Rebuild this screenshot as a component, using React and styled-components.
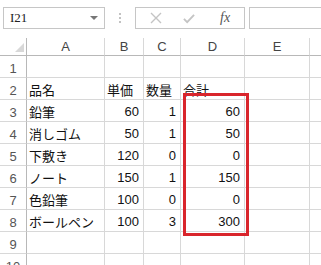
import React from 'react';
import styled, { createGlobalStyle } from 'styled-components';

const GlobalStyle = createGlobalStyle`
  html, body {
    margin: 0;
    padding: 0;
    background: #ffffff;
  }
  body {
    font-family: "Liberation Sans", "Noto Sans CJK JP", sans-serif;
    overflow: hidden;
  }
`;

const columns = [
  { key: 'A', width: 78 },
  { key: 'B', width: 39 },
  { key: 'C', width: 37 },
  { key: 'D', width: 64 },
  { key: 'E', width: 65 },
  { key: 'F', width: 40 },
];

const rows = [
  ['', '', '', '', ''],
  ['品名', '単価', '数量', '合計', ''],
  ['鉛筆', 60, 1, 60, ''],
  ['消しゴム', 50, 1, 50, ''],
  ['下敷き', 120, 0, 0, ''],
  ['ノート', 150, 1, 150, ''],
  ['色鉛筆', 100, 0, 0, ''],
  ['ボールペン', 100, 3, 300, ''],
  ['', '', '', '', ''],
  ['', '', '', '', ''],
];

const gridTemplate = `27px ${columns.map((c) => `${c.width}px`).join(' ')}`;

export default function App() {
  return (
    <>
      <GlobalStyle />
      <Sheet>
        <FormulaBar>
          <NameBox>
            <span>I21</span>
            <Caret />
          </NameBox>
          <Grip>
            <i />
            <i />
            <i />
          </Grip>
          <ButtonBox>
            <IconButton>
              <svg width="12" height="12" viewBox="0 0 12 12">
                <path d="M1 1 L11 11 M11 1 L1 11" stroke="#c4c4c4" strokeWidth="1.4" fill="none" />
              </svg>
            </IconButton>
            <IconButton>
              <svg width="13" height="11" viewBox="0 0 13 11">
                <path d="M1 6 L4.5 9.5 L12 1.5" stroke="#c4c4c4" strokeWidth="2" fill="none" />
              </svg>
            </IconButton>
            <Fx>fx</Fx>
          </ButtonBox>
          <FormulaInput />
        </FormulaBar>

        <GridWrap>
          <Grid>
            <Corner>
              <svg width="9" height="9" viewBox="0 0 9 9">
                <path d="M9 0 L9 9 L0 9 Z" fill="#d8d8d8" />
              </svg>
            </Corner>
            {columns.map((c) => (
              <ColHead key={c.key} $last={c.key === 'F'}>
                {c.key === 'F' ? '' : c.key}
              </ColHead>
            ))}
            {rows.map((r, i) => (
              <React.Fragment key={i}>
                <RowHead>{i + 1}</RowHead>
                {r.map((v, j) => (
                  <Cell key={j} $num={typeof v === 'number'}>
                    {v}
                  </Cell>
                ))}
                <Cell />
              </React.Fragment>
            ))}
          </Grid>
          <Highlight />
        </GridWrap>
      </Sheet>
    </>
  );
}

const Sheet = styled.div`
  width: 321px;
  height: 265px;
  overflow: hidden;
  background: #ffffff;
`;

const FormulaBar = styled.div`
  display: flex;
  align-items: center;
  height: 22px;
  padding: 7px 0 0 3px;
`;

const NameBox = styled.div`
  box-sizing: border-box;
  width: 102px;
  height: 22px;
  border: 1px solid #c6c6c6;
  display: flex;
  align-items: center;
  justify-content: space-between;
  padding: 0 5px 0 6px;
  font-family: "Liberation Serif", serif;
  font-size: 13px;
  color: #222;
`;

const Caret = styled.span`
  width: 0;
  height: 0;
  border-left: 4px solid transparent;
  border-right: 4px solid transparent;
  border-top: 4px solid #777;
  margin-right: 1px;
`;

const Grip = styled.div`
  width: 30px;
  display: flex;
  flex-direction: column;
  align-items: center;
  gap: 2px;

  i {
    display: block;
    width: 2px;
    height: 2px;
    background: #c2c2c2;
  }
`;

const ButtonBox = styled.div`
  box-sizing: border-box;
  width: 110px;
  height: 22px;
  border: 1px solid #c6c6c6;
  display: flex;
  align-items: center;
  padding-left: 14px;
  gap: 21px;
`;

const IconButton = styled.span`
  display: flex;
  align-items: center;
  width: 12px;
`;

const Fx = styled.span`
  font-family: "Liberation Serif", serif;
  font-style: italic;
  font-size: 14px;
  color: #555;
  margin-left: 4px;
`;

const FormulaInput = styled.div`
  box-sizing: border-box;
  flex: 1;
  height: 22px;
  margin-left: 4px;
  border: 1px solid #c6c6c6;
  border-right: none;
`;

const GridWrap = styled.div`
  position: relative;
  margin-top: 9px;
`;

const Grid = styled.div`
  display: grid;
  grid-template-columns: ${gridTemplate};
  grid-template-rows: 18px repeat(${rows.length}, 22px);
`;

const Corner = styled.div`
  box-sizing: border-box;
  border-right: 1px solid #b8b8b8;
  border-bottom: 1px solid #b8b8b8;
  display: flex;
  align-items: flex-end;
  justify-content: flex-end;
  padding: 0 2px 3px 0;
`;

const ColHead = styled.div`
  box-sizing: border-box;
  border-bottom: 1px solid #b8b8b8;
  border-right: ${({ $last }) => ($last ? 'none' : '1px solid #d8d8d8')};
  display: flex;
  align-items: flex-end;
  justify-content: center;
  padding-bottom: 1px;
  font-size: 13px;
  color: #444;
  line-height: 14px;
`;

const RowHead = styled.div`
  box-sizing: border-box;
  border-right: 1px solid #b8b8b8;
  border-bottom: 1px solid #d8d8d8;
  display: flex;
  align-items: flex-end;
  justify-content: center;
  padding-bottom: 1px;
  font-size: 13px;
  color: #555;
  line-height: 14px;
`;

const Cell = styled.div`
  box-sizing: border-box;
  border-right: 1px solid #d8d8d8;
  border-bottom: 1px solid #d8d8d8;
  display: flex;
  align-items: center;
  justify-content: ${({ $num }) => ($num ? 'flex-end' : 'flex-start')};
  padding: 1px 4px 0 2px;
  font-size: 13px;
  color: #111;
  white-space: nowrap;
  overflow: visible;
`;

const Highlight = styled.div`
  position: absolute;
  left: 183px;
  top: 55px;
  width: 66px;
  height: 143px;
  box-sizing: border-box;
  border: 3px solid #d9252c;
  pointer-events: none;
`;
